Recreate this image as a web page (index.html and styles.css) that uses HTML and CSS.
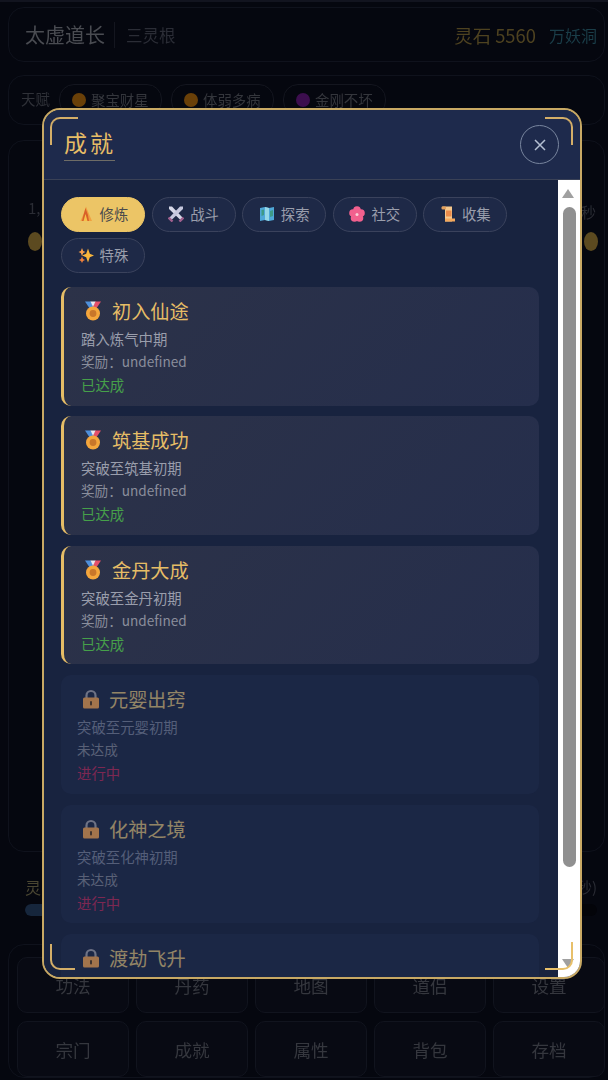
FILE: index.html
```html
<!DOCTYPE html>
<html>
<head>
    <title>成就</title>
    <link rel="stylesheet" href="styles.css">
</head>
<body>
    <svg class="defs" width="0" height="0">
        <symbol id="i-fire" viewBox="0 0 16 16">
            <path d="M8 0.5 L11 8 L14 15 H2.5 L5.5 8 Z" fill="#f0a040"/>
            <path d="M7.5 2 L10 9 L11 15 H4 L5.5 9 Z" fill="#d8602a"/>
            <path d="M7.5 8 L9.5 15 H5.5 Z" fill="#f6c04a"/>
        </symbol>
        <symbol id="i-swords" viewBox="0 0 16 16">
            <path d="M1 0.5 H4 L15 12 L13 14.5 L1 3 Z" fill="#d6d8e8"/>
            <path d="M15 0.5 H12 L1 12 L3 14.5 L15 3 Z" fill="#c6c8de"/>
            <path d="M0.5 11.5 L4.5 15.5 M15.5 11.5 L11.5 15.5" stroke="#a0608e" stroke-width="2.4"/>
        </symbol>
        <symbol id="i-map" viewBox="0 0 16 16">
            <path d="M1 2 L6 1 L10 2 L15 1 V14 L10 15 L6 14 L1 15 Z" fill="#4fa8d8"/>
            <path d="M6 1 L10 2 V15 L6 14 Z" fill="#96d8e8"/>
            <path d="M2.5 4 L5 3.5 V9 L2.5 10 Z M11 5 L14 4 V10 L11 11 Z" fill="#3e9a86"/>
        </symbol>
        <symbol id="i-flower" viewBox="0 0 16 16">
            <g fill="#f2608e">
                <circle cx="8" cy="4" r="3.8"/>
                <circle cx="12" cy="7" r="3.8"/>
                <circle cx="10.5" cy="12" r="3.8"/>
                <circle cx="5.5" cy="12" r="3.8"/>
                <circle cx="4" cy="7" r="3.8"/>
            </g>
            <circle cx="8" cy="8.5" r="1.5" fill="#fbd0d8"/>
        </symbol>
        <symbol id="i-scroll" viewBox="0 0 16 16">
            <path d="M2 0.5 H12 V15.5 H5 V3 Z" fill="#f6c88c"/>
            <rect x="5" y="12.5" width="10" height="3" fill="#f4a85c"/>
            <rect x="6" y="4.5" width="5.5" height="6" fill="#ea8a4a"/>
            <rect x="1.5" y="0.5" width="4.5" height="3" rx="1" fill="#e3a05c"/>
        </symbol>
        <symbol id="i-sparkle" viewBox="0 0 16 16">
            <path d="M10 1.5 L11.8 6.8 L16 8.5 L11.8 10.2 L10 15.5 L8.2 10.2 L4 8.5 L8.2 6.8 Z" fill="#f9b63c"/>
            <path d="M4 1 L5.2 4 L7.5 5 L5.2 6 L4 9 L2.8 6 L0.5 5 L2.8 4 Z" fill="#f8a04c"/>
            <path d="M4 9.5 L5 12 L7 13 L5 14 L4 16 L3 14 L1 13 L3 12 Z" fill="#f0803c"/>
        </symbol>
        <symbol id="i-medal" viewBox="0 0 20 20">
            <path d="M2 0.5 H8 L11 8 H7 Z" fill="#4f90dc"/>
            <path d="M18 0.5 H12 L9 8 H13 Z" fill="#e4506a"/>
            <path d="M7.5 0.5 H12.5 L10 6 Z" fill="#e8e8ee"/>
            <circle cx="10" cy="12.5" r="7" fill="#f4a63c"/>
            <circle cx="10" cy="12.5" r="3.4" fill="#c8762a"/>
        </symbol>
        <symbol id="i-lock" viewBox="0 0 20 20">
            <path d="M5.5 9 V6.5 A4.5 4.5 0 0 1 14.5 6.5 V9" fill="none" stroke="#a8a8b4" stroke-width="2.2"/>
            <rect x="2" y="8.5" width="16" height="11" rx="1.5" fill="#ffaa55"/>
            <rect x="9" y="12" width="2" height="4.5" rx="1" fill="#5c4026"/>
        </symbol>
    </svg>

    <div class="page">
        <div class="panel topbar">
            <div class="topbar-left">
                <span class="player">太虚道长</span>
                <span class="root">三灵根</span>
            </div>
            <div class="topbar-right">
                <span class="stone">灵石 5560</span>
                <span class="place">万妖洞</span>
            </div>
        </div>

        <div class="panel talents">
            <span class="talents-label">天赋</span>
            <span class="chip"><i class="dot orange"></i>聚宝财星</span>
            <span class="chip"><i class="dot orange"></i>体弱多病</span>
            <span class="chip"><i class="dot purple"></i>金刚不坏</span>
        </div>

        <div class="panel main">
            <div class="bar-head"><span>1,</span><span class="bar-unit">秒</span></div>
            <div class="bar"><i class="knob"></i><i class="knob"></i></div>
        </div>

        <div class="spirit">
            <div class="bar-head"><span class="spirit-label">灵</span><span>秒)</span></div>
            <div class="spirit-bar"><i></i></div>
        </div>

        <div class="panel actions">
            <div class="action">功法</div>
            <div class="action">丹药</div>
            <div class="action">地图</div>
            <div class="action">道侣</div>
            <div class="action">设置</div>
            <div class="action">宗门</div>
            <div class="action">成就</div>
            <div class="action">属性</div>
            <div class="action">背包</div>
            <div class="action">存档</div>
        </div>
    </div>

    <div class="overlay">
        <div class="modal">
            <div class="modal-head">
                <h2 class="modal-title">成就</h2>
                <div class="close"><svg width="14" height="14" viewBox="0 0 14 14"><path d="M2 2 L12 12 M12 2 L2 12" stroke="#b4bfd2" stroke-width="1.5"/></svg></div>
            </div>
            <div class="modal-body">
                <div class="modal-scroll">
                    <div class="tabs">
                        <div class="tab active"><svg class="tab-icon"><use href="#i-fire"/></svg>修炼</div>
                        <div class="tab"><svg class="tab-icon"><use href="#i-swords"/></svg>战斗</div>
                        <div class="tab"><svg class="tab-icon"><use href="#i-map"/></svg>探索</div>
                        <div class="tab"><svg class="tab-icon"><use href="#i-flower"/></svg>社交</div>
                        <div class="tab"><svg class="tab-icon"><use href="#i-scroll"/></svg>收集</div>
                        <div class="tab"><svg class="tab-icon"><use href="#i-sparkle"/></svg>特殊</div>
                    </div>

                    <div class="card done">
                        <div class="card-title"><svg class="card-icon"><use href="#i-medal"/></svg>初入仙途</div>
                        <div class="card-desc">踏入炼气中期</div>
                        <div class="card-reward">奖励：undefined</div>
                        <div class="card-state">已达成</div>
                    </div>
                    <div class="card done">
                        <div class="card-title"><svg class="card-icon"><use href="#i-medal"/></svg>筑基成功</div>
                        <div class="card-desc">突破至筑基初期</div>
                        <div class="card-reward">奖励：undefined</div>
                        <div class="card-state">已达成</div>
                    </div>
                    <div class="card done">
                        <div class="card-title"><svg class="card-icon"><use href="#i-medal"/></svg>金丹大成</div>
                        <div class="card-desc">突破至金丹初期</div>
                        <div class="card-reward">奖励：undefined</div>
                        <div class="card-state">已达成</div>
                    </div>
                    <div class="card locked">
                        <div class="card-title"><svg class="card-icon"><use href="#i-lock"/></svg>元婴出窍</div>
                        <div class="card-desc">突破至元婴初期</div>
                        <div class="card-reward">未达成</div>
                        <div class="card-state">进行中</div>
                    </div>
                    <div class="card locked">
                        <div class="card-title"><svg class="card-icon"><use href="#i-lock"/></svg>化神之境</div>
                        <div class="card-desc">突破至化神初期</div>
                        <div class="card-reward">未达成</div>
                        <div class="card-state">进行中</div>
                    </div>
                    <div class="card locked">
                        <div class="card-title"><svg class="card-icon"><use href="#i-lock"/></svg>渡劫飞升</div>
                    </div>
                </div>
                <div class="scrollbar">
                    <i class="arrow up"></i>
                    <i class="thumb"></i>
                    <i class="arrow down"></i>
                </div>
            </div>
            <i class="corner tl"></i>
            <i class="corner tr"></i>
            <i class="corner bl"></i>
            <i class="corner br"></i>
        </div>
    </div>
</body>
</html>
```

FILE: styles.css
```css
:root {
    --gold: #e6bd66;
    --navy: #1d2848;
}
* {
    box-sizing: border-box;
}
html, body {
    height: 100%;
}
body {
    margin: 0;
    background: #05070f;
    font-family: "Noto Sans CJK SC", "Noto Sans", sans-serif;
    overflow: hidden;
    filter: blur(0.5px);
}
.defs {
    position: absolute;
}

/* page behind the modal */
.page {
    height: 1080px;
    padding: 5px 3px 2px 8px;
    border-top: 2px solid #12141f;
    display: flex;
    flex-direction: column;
}
.panel {
    border: 1px solid #0f121c;
    border-radius: 16px;
}
.topbar {
    height: 55px;
    padding: 0 0 0 16px;
    display: flex;
    justify-content: space-between;
    align-items: center;
}
.topbar-left {
    display: flex;
    align-items: center;
}
.player {
    font-size: 20px;
    color: #4a4c52;
    padding-right: 9px;
    border-right: 1px solid #14161f;
    line-height: 26px;
}
.root {
    font-size: 16.5px;
    color: #2b2d36;
    margin-left: 11px;
}
.topbar-right {
    display: flex;
    gap: 13px;
    align-items: center;
    margin-right: 7px;
}
.stone {
    font-size: 18.4px;
    color: #4e4220;
}
.place {
    font-size: 16px;
    color: #1a3d48;
}
.talents {
    margin-top: 13px;
    height: 50px;
    padding: 8px 0 0 12px;
    display: flex;
    gap: 9px;
    align-items: flex-start;
}
.talents-label {
    font-size: 14.4px;
    color: #2f3138;
    line-height: 30px;
    margin-right: 0;
}
.chip {
    font-size: 14.4px;
    color: #34363c;
    border: 1px solid #14161f;
    border-radius: 15px;
    width: 103px;
    justify-content: center;
    line-height: 30px;
    height: 32px;
    display: flex;
    align-items: center;
    gap: 5px;
}
.dot {
    width: 14px;
    height: 14px;
    border-radius: 50%;
}
.dot.orange {
    background: #6a4008;
}
.dot.purple {
    background: #3c0e4e;
}
.main {
    margin-top: 15px;
    height: 712px;
    padding: 56px 6px 0 19px;
}
.bar-head {
    display: flex;
    justify-content: space-between;
    font-size: 15px;
    color: #2a2c34;
    line-height: 22px;
}
.bar-unit {
    margin-top: 4px;
    margin-right: 2px;
}
.bar {
    margin-top: 9px;
    height: 19px;
    display: flex;
    justify-content: space-between;
}
.knob {
    width: 14px;
    height: 19px;
    border-radius: 50%;
    background: #5c4a20;
}
.spirit {
    margin-top: 24px;
    padding: 0 8px 0 17px;
}
.spirit-label {
    color: #4a4632;
    font-size: 16px;
}
.spirit-bar {
    margin-top: 6px;
    height: 12px;
    border-radius: 6px;
    background: #030409;
}
.spirit-bar i {
    display: block;
    width: 40px;
    height: 12px;
    border-radius: 6px;
    background: #16263c;
}
.actions {
    margin-top: 28px;
    flex: 1;
    padding: 12px 0 0 8px;
    display: grid;
    grid-template-columns: repeat(5, 112px);
    grid-template-rows: 56px 56px;
    gap: 8px 7px;
}
.action {
    border: 1px solid #11141e;
    border-radius: 10px;
    background: #080a13;
    color: #35373e;
    font-size: 17.6px;
    display: flex;
    align-items: center;
    justify-content: center;
    padding-top: 1px;
}

/* modal */
.overlay {
    position: fixed;
    inset: 0;
}
.modal {
    position: absolute;
    left: 42px;
    top: 108px;
    width: 540px;
    height: 871px;
    border: 2px solid #c8a964;
    border-radius: 18px;
    background: var(--navy);
    display: flex;
    flex-direction: column;
    overflow: hidden;
}
.modal-head {
    height: 70px;
    flex: none;
    background: #1e2a4c;
    border-bottom: 1px solid #3a4156;
    padding: 0 21px 0 20px;
    display: flex;
    justify-content: space-between;
    align-items: center;
}
.modal-title {
    margin: 0 0 3px;
    font-size: 23px;
    font-weight: 400;
    letter-spacing: 3px;
    color: var(--gold);
    line-height: 32px;
    width: 51px;
    border-bottom: 1px solid #6e6c66;
    padding-bottom: 2px;
    white-space: nowrap;
}
.close {
    width: 39px;
    height: 39px;
    border: 1.5px solid #78859e;
    border-radius: 50%;
    display: flex;
    align-items: center;
    justify-content: center;
}
.modal-body {
    flex: 1;
    min-height: 0;
    display: flex;
    background: #18233f;
}
.modal-scroll {
    flex: 1;
    min-width: 0;
    overflow: hidden;
    padding: 17px 19px 0 17px;
}
.tabs {
    display: flex;
    flex-wrap: wrap;
    gap: 6px 6.6px;
    margin-bottom: 14px;
}
.tab {
    width: 84px;
    height: 35px;
    padding-bottom: 2px;
    border: 1px solid #3a425c;
    border-radius: 18px;
    background: #1e2947;
    color: #9a9eac;
    font-size: 14.4px;
    display: flex;
    align-items: center;
    justify-content: center;
    gap: 6px;
}
.tab.active {
    background: #ecc566;
    border-color: #ecc566;
    color: #4a4a4c;
}
.tab-icon {
    width: 16px;
    height: 16px;
    flex: none;
}
.card {
    height: 118.5px;
    margin-bottom: 10.9px;
    border-radius: 10px;
    padding: 10px 16px 0;
}
.card.done {
    background: linear-gradient(135deg, #2c3248, #252e4c);
    border-left: 3px solid var(--gold);
    padding-left: 17px;
}
.card.locked {
    background: #1e2a4a;
    opacity: 0.6;
}
.card-title {
    display: flex;
    align-items: center;
    gap: 8px;
    font-size: 19.2px;
    line-height: 28px;
    color: var(--gold);
}
.card.done .card-title {
    padding-left: 2px;
    gap: 9px;
}
.card.locked .card-title {
    padding-left: 4px;
    color: #e4c680;
}
.card-icon {
    width: 20px;
    height: 20px;
    flex: none;
}
.card-desc, .card-reward, .card-state {
    font-size: 14.4px;
    line-height: 23px;
}
.card-desc {
    margin-top: 2px;
    color: #9a9eac;
}
.card-reward {
    font-size: 13.6px;
    color: #8a8e9c;
}
.card.locked .card-desc {
    color: #7d86a0;
}
.card.locked .card-reward {
    color: #858a9c;
}
.card-state {
    color: #46a04a;
}
.card.locked .card-state {
    color: #c02c60;
}

/* drawn scrollbar */
.scrollbar {
    width: 22px;
    flex: none;
    background: #fff;
    display: flex;
    flex-direction: column;
    align-items: center;
    position: relative;
}
.arrow {
    position: absolute;
    left: 4px;
    border-left: 6.5px solid transparent;
    border-right: 6.5px solid transparent;
}
.arrow.up {
    top: 9px;
    border-bottom: 9px solid #a0a0a0;
}
.arrow.down {
    bottom: 9px;
    border-top: 9px solid #a0a0a0;
}
.thumb {
    width: 13px;
    height: 660px;
    margin-top: 27px;
    border-radius: 7px;
    background: #909090;
}
.corner {
    position: absolute;
    width: 28px;
    height: 28px;
    border: 0 solid #d4ae68;
}
.corner.tl {
    left: 6px;
    top: 7px;
    border-width: 2.5px 0 0 2.5px;
    border-top-left-radius: 10px;
}
.corner.tr {
    right: 7px;
    top: 7px;
    border-width: 2.5px 2.5px 0 0;
    border-top-right-radius: 10px;
}
.corner.bl {
    left: 6px;
    bottom: 7px;
    height: 26px;
    width: 25px;
    border-width: 0 0 2.5px 2.5px;
    border-bottom-left-radius: 10px;
}
.corner.br {
    right: 7px;
    bottom: 7px;
    height: 28px;
    border-width: 0 2.5px 2.5px 0;
    border-color: #e8c06a;
    border-bottom-right-radius: 10px;
}
```
